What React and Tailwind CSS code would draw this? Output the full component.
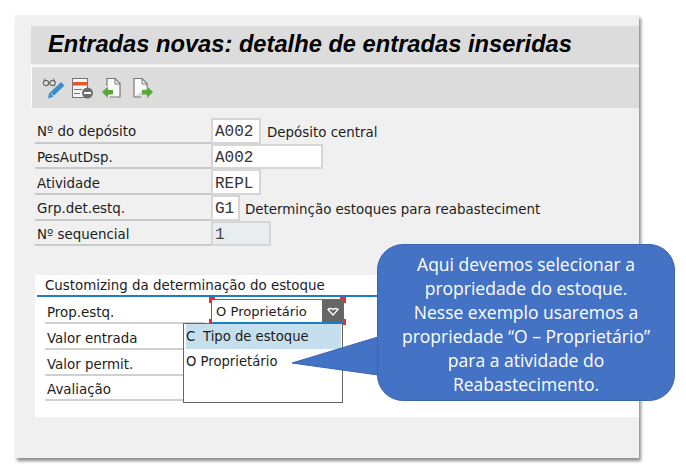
import React from 'react'

const topRows = [
  { label: 'Nº do depósito', value: 'A002', box: 'w-[50px]', note: 'Depósito central', noteGap: 'ml-[6px]' },
  { label: 'PesAutDsp.', value: 'A002', box: 'w-[112px]' },
  { label: 'Atividade', value: 'REPL', box: 'w-[50px]' },
  { label: 'Grp.det.estq.', value: 'G1', box: 'w-[29px]', note: 'Determinção estoques para reabasteciment', noteGap: 'ml-[5px]' },
  { label: 'Nº sequencial', value: '1', box: 'w-[60px]', disabled: true },
]

const bottomRows = ['Prop.estq.', 'Valor entrada', 'Valor permit.', 'Avaliação']

const FormRow = ({ label, value, box, note, noteGap, disabled }) => (
  <div className="flex h-[25.7px] items-stretch">
    <div className="flex w-[176px] items-center border-b-2 border-[#c9c9c9] pl-[2px] pt-[5px] text-[#1c1c1c]">{label}</div>
    <div
      className={`flex ${box} items-center border-2 border-[#d6d6d6] pl-[2px] pt-[3px] font-['Liberation_Mono',monospace] text-[16px] ${
        disabled ? 'bg-[#e9edf0] text-[#444]' : 'bg-white text-[#333]'
      }`}
    >
      {value}
    </div>
    {note && <span className={`${noteGap} self-center whitespace-nowrap pt-[4px] text-[#1c1c1c]`}>{note}</span>}
  </div>
)

const Toolbar = () => (
  <div className="mt-[2px] flex h-[42px] items-center border-l border-t border-white bg-[#dcdcdc] pl-[10px]">
    {/* oculos + lapis */}
    <svg width="24" height="22" viewBox="0 0 24 22" fill="none">
      <circle cx="4" cy="6" r="2.700" stroke="#666" strokeWidth="1.200" />
      <circle cx="10.500" cy="6" r="2.700" stroke="#666" strokeWidth="1.200" />
      <path d="M6.500 5.500h1.500M1.500 4.500L3 1.500M13 4.500L11.500 1.500" stroke="#777" />
      <path d="M19 5l3.500 3.500-12 11.500-4.500 1.500 1-5z" fill="#3c8fc8" />
      <path d="M9 16.500l3 2.500" stroke="#cfe8f6" />
    </svg>
    <svg className="ml-[5px]" width="23" height="22" viewBox="0 0 23 22" fill="none">
      <rect x="1.500" y="1.500" width="15" height="19" fill="#f6f6f6" stroke="#777" />
      <rect x="2" y="5" width="14" height="3.500" fill="#e2582a" />
      <path d="M3 12.500h8M3 16.500h6" stroke="#777" />
      <circle cx="16.500" cy="16" r="5.500" fill="#6e6e6e" />
      <rect x="13" y="15" width="7" height="2" fill="#fff" />
    </svg>
    <svg className="ml-[7px]" width="21" height="22" viewBox="0 0 21 22" fill="none">
      <path d="M6 9V1.500h8l5 5V20H9" fill="#fbfbfb" stroke="#777" strokeWidth="1.200" />
      <path d="M14 1.500V7h5" stroke="#777" />
      <path d="M1 15l6-5.500V13h5v4.500H7V21z" fill="#58a83a" />
    </svg>
    <svg className="ml-[10px]" width="22" height="22" viewBox="0 0 22 22" fill="none">
      <path d="M2 20V1.500h8l5 5V10M9 20H2" fill="#fbfbfb" stroke="#777" strokeWidth="1.200" />
      <path d="M10 1.500V7h5" stroke="#777" />
      <path d="M21 15l-6-5.500V13h-5v4.500h5V21z" fill="#58a83a" />
    </svg>
  </div>
)

const Callout = () => (
  <>
    <svg className="absolute left-[290px] top-[330px]" width="92" height="50" viewBox="0 0 92 50">
      <path d="M88 7L2 33 88 45z" fill="#4472c4" />
      <path d="M88 7L2 33 88 45" fill="none" stroke="#3b64ad" />
    </svg>
    <div className="absolute left-[377px] top-[244px] flex h-[157px] w-[298px] flex-col justify-center rounded-[26px] border border-[#3b64ad] bg-[#4472c4] pt-[3px] text-center font-['Open_Sans',sans-serif] text-[17.500px] leading-[24px] text-white">
      <p>Aqui devemos selecionar a</p>
      <p>propriedade do estoque.</p>
      <p>Nesse exemplo usaremos a</p>
      <p>propriedade “O – Proprietário”</p>
      <p>para a atividade do</p>
      <p>Reabastecimento.</p>
    </div>
  </>
)

export default function App() {
  return (
    <div className="relative h-[476px] w-[686px] overflow-hidden bg-white pl-[15px] pt-[15px] font-['DejaVu_Sans',sans-serif] text-[13.400px]">
      <div className="h-[443px] w-[624px] bg-[#f0f0f0] pl-[16px] pt-[11px] shadow-[2px_3px_3px_rgba(0,0,0,0.45)]">
        <div className="flex h-[38px] items-center whitespace-nowrap bg-[#dcdcdc] pl-[17px] font-['Liberation_Sans',sans-serif] text-[23.700px] font-bold italic text-black">
          Entradas novas: detalhe de entradas inseridas
        </div>
        <Toolbar />

        <div className="ml-[4px] mt-[10px]">
          {topRows.map((row) => (
            <FormRow key={row.label} {...row} />
          ))}
        </div>

        <div className="relative ml-[4px] mt-[29px] h-[142px] bg-white pl-[10px] pt-[1px]">
          <div className="h-[19px] text-[#1c1c1c]">Customizing da determinação do estoque</div>
          <div className="-ml-[8px] h-[2px] bg-[#1c7ec4]" />
          <div className="pt-[1px]">
            {bottomRows.map((label) => (
              <div key={label} className="flex h-[25.700px] w-[160px] items-center border-b-2 border-[#d0d0d0] pl-[2px] pt-[6px] text-[#1c1c1c]">
                {label}
              </div>
            ))}
          </div>

          {/* campo selecionado */}
          <div className="absolute left-[176px] top-[24px] flex h-[24px] w-[133px] items-center justify-between border border-[#1c7ec4] bg-white pl-[4px] text-[13.100px] text-[#1c1c1c]">
            O Proprietário
            <span className="flex h-full w-[21px] items-center justify-center bg-[#666]">
              <svg width="12" height="9" viewBox="0 0 12 9" fill="none">
                <path d="M1 2.500C3 .5 4.500 1.500 6 2.500 7.500 1.500 9 .5 11 2.500L6 8z" stroke="#fff" strokeWidth="1.300" />
              </svg>
            </span>
            <i className="absolute -left-[3px] -top-[3px] h-[6px] w-[6px] border-l-2 border-t-2 border-[#ee2a2a]" />
            <i className="absolute -right-[3px] -top-[3px] h-[6px] w-[6px] border-r-2 border-t-2 border-[#ee2a2a]" />
            <i className="absolute -bottom-[3px] -left-[3px] h-[6px] w-[6px] border-b-2 border-l-2 border-[#ee2a2a]" />
            <i className="absolute -bottom-[3px] -right-[3px] h-[6px] w-[6px] border-b-2 border-r-2 border-[#ee2a2a]" />
          </div>

          {/* lista do dropdown */}
          <div className="absolute left-[148px] top-[48px] h-[80px] w-[160px] border border-[#666] bg-white pl-[2px] text-[13.200px] text-[#1c1c1c]">
            <div className="flex h-[25px] w-[155px] items-center bg-[#c6dfec] pb-[1px]">
              <span className="w-[17px]">C</span>Tipo de estoque
            </div>
            <div className="flex h-[24px] items-center">O Proprietário</div>
          </div>
        </div>
      </div>
      <Callout />
    </div>
  )
}
